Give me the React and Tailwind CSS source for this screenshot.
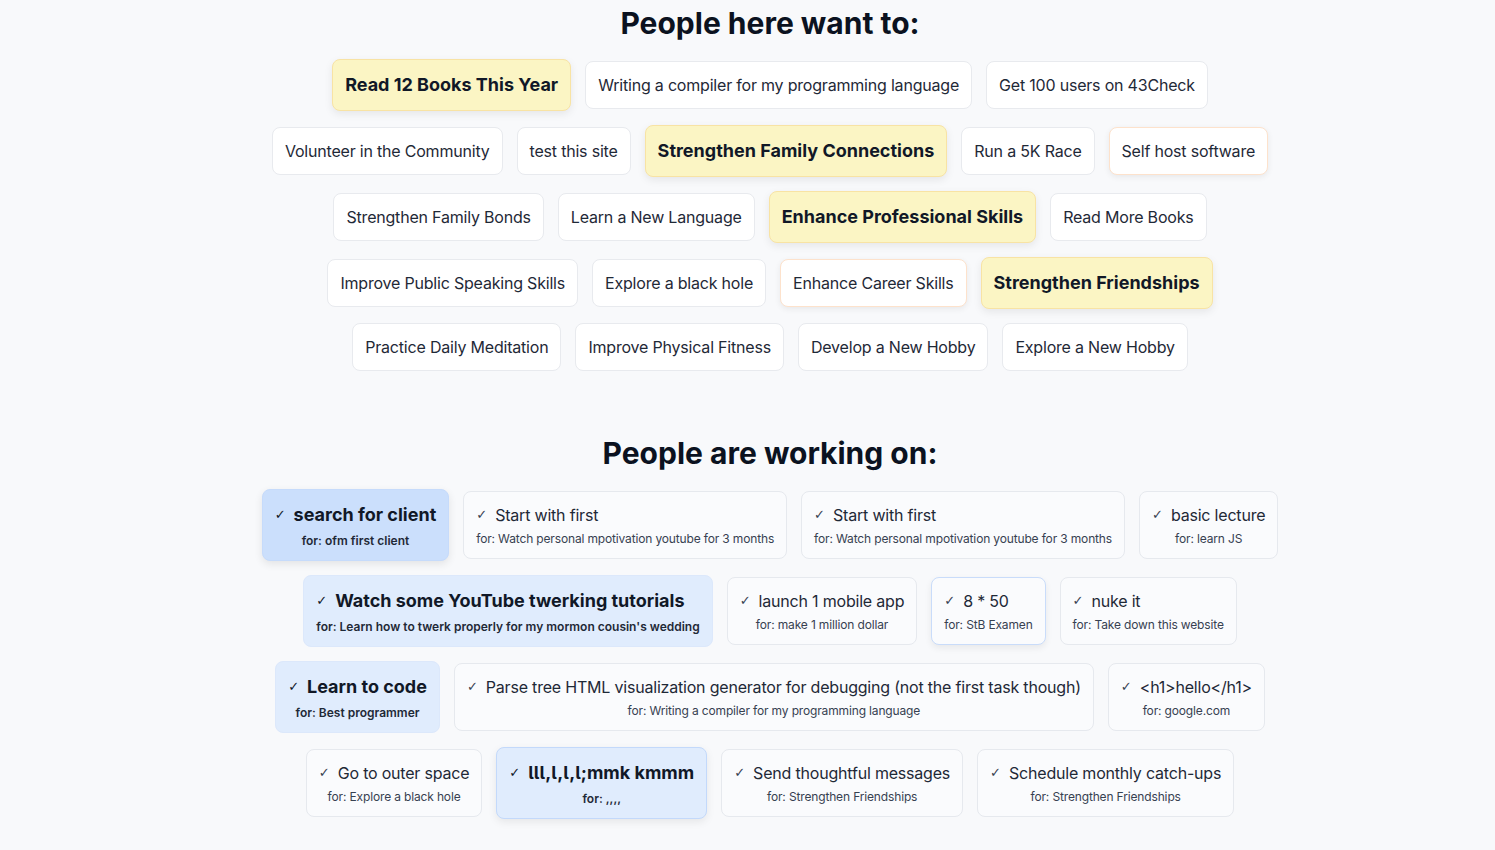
import React from "react";

const goalRows = [
  [
    { t: "Read 12 Books This Year", k: "hl" },
    { t: "Writing a compiler for my programming language" },
    { t: "Get 100 users on 43Check" },
  ],
  [
    { t: "Volunteer in the Community" },
    { t: "test this site" },
    { t: "Strengthen Family Connections", k: "hl" },
    { t: "Run a 5K Race" },
    { t: "Self host software", k: "or" },
  ],
  [
    { t: "Strengthen Family Bonds" },
    { t: "Learn a New Language" },
    { t: "Enhance Professional Skills", k: "hl" },
    { t: "Read More Books" },
  ],
  [
    { t: "Improve Public Speaking Skills" },
    { t: "Explore a black hole" },
    { t: "Enhance Career Skills", k: "or" },
    { t: "Strengthen Friendships", k: "hl" },
  ],
  [
    { t: "Practice Daily Meditation" },
    { t: "Improve Physical Fitness" },
    { t: "Develop a New Hobby" },
    { t: "Explore a New Hobby" },
  ],
];

const taskRows = [
  [
    { t: "search for client", f: "ofm first client", k: "strong" },
    { t: "Start with first", f: "Watch personal mpotivation youtube for 3 months" },
    { t: "Start with first", f: "Watch personal mpotivation youtube for 3 months" },
    { t: "basic lecture", f: "learn JS" },
  ],
  [
    { t: "Watch some YouTube twerking tutorials", f: "Learn how to twerk properly for my mormon cousin's wedding", k: "light" },
    { t: "launch 1 mobile app", f: "make 1 million dollar" },
    { t: "8 * 50", f: "StB Examen", k: "blueborder" },
    { t: "nuke it", f: "Take down this website" },
  ],
  [
    { t: "Learn to code", f: "Best programmer", k: "light" },
    { t: "Parse tree HTML visualization generator for debugging (not the first task though)", f: "Writing a compiler for my programming language" },
    { t: "<h1>hello</h1>", f: "google.com" },
  ],
  [
    { t: "Go to outer space", f: "Explore a black hole" },
    { t: "lll,l,l,l;mmk kmmm", f: ",,,,", k: "lightborder", tail: true },
    { t: "Send thoughtful messages", f: "Strengthen Friendships" },
    { t: "Schedule monthly catch-ups", f: "Strengthen Friendships" },
  ],
];

function Pill({ t, k }) {
  if (k === "hl") {
    return (
      <div className="rounded-lg border border-[#f8e3a4] bg-[#fbf5c4] px-3 py-[11px] text-lg leading-7 font-bold text-[#111827] shadow-[0_3px_8px_rgba(0,0,0,0.08)]">
        {t}
      </div>
    );
  }
  if (k === "or") {
    return (
      <div className="rounded-lg border border-[#fde2cc] bg-white px-3 py-[11px] text-base leading-6 tracking-[-0.2px] text-[#1f2937] shadow-[0_2px_6px_rgba(0,0,0,0.07)]">
        {t}
      </div>
    );
  }
  return (
    <div className="rounded-lg border border-[#e8eaee] bg-white px-3 py-[11px] text-base leading-6 tracking-[-0.2px] text-[#1f2937]">
      {t}
    </div>
  );
}

function Task({ t, f, k, tail }) {
  const bold = k === "strong" || k === "light" || k === "lightborder";
  let box = "border-[#e6e9ee] bg-[#fafbfd]";
  if (k === "strong") box = "border-[#c6dbfb] bg-[#cbdffc] shadow-[0_3px_8px_rgba(0,0,0,0.09)]";
  if (k === "light") box = "border-[#dce8fb] bg-[#e0ecfd]";
  if (k === "lightborder") box = "border-[#c3d9fb] bg-[#e0ecfd] shadow-[0_3px_8px_rgba(0,0,0,0.08)]";
  if (k === "blueborder") box = "border-[#c9dcfa] bg-[#fafbfd] shadow-[0_3px_7px_rgba(0,0,0,0.07)]";
  return (
    <div className={`rounded-lg border px-3 py-[11px] ${box}`}>
      <div className="flex items-center gap-2">
        <span
          className={
            bold
              ? "text-[13px] leading-4 font-bold text-[#111827]"
              : "text-[13px] leading-4 text-[#374151]"
          }
          style={{ fontFamily: "'DejaVu Sans', sans-serif" }}
        >
          ✓
        </span>
        <span
          className={
            bold
              ? `text-lg leading-7 font-bold whitespace-nowrap text-[#111827] ${tail ? "[font-feature-settings:'cv05']" : ""}`
              : "text-base leading-6 tracking-[-0.2px] whitespace-nowrap text-[#1f2937] [font-feature-settings:'calt'_0]"
          }
        >
          {t}
        </span>
      </div>
      <div
        className={
          bold
            ? "mt-1 text-center text-xs leading-4 font-semibold whitespace-nowrap text-[#1f2937]"
            : "mt-1 text-center text-xs leading-4 tracking-[-0.15px] whitespace-nowrap text-[#374151]"
        }
      >
        for: {f}
      </div>
    </div>
  );
}

export default function App() {
  return (
    <div
      className="min-h-[850px] bg-[#f8f9fb] pl-[45px] text-[#111827]"
      style={{ fontFamily: "Inter, 'Noto Sans', sans-serif" }}
    >
      <div className="mx-auto max-w-5xl pt-[5px]">
        <h1 className="mb-[18px] text-center text-3xl leading-9 font-bold text-[#0b1220]">
          People here want to:
        </h1>
        <div className="flex flex-col gap-3.5">
          {goalRows.map((row, i) => (
            <div key={i} className="flex items-center justify-center gap-3.5">
              {row.map((p, j) => (
                <Pill key={j} {...p} />
              ))}
            </div>
          ))}
        </div>

        <h2 className="mt-16 mb-[18px] text-center text-3xl leading-9 font-bold text-[#0b1220]">
          People are working on:
        </h2>
        <div className="flex flex-col gap-3.5">
          {taskRows.map((row, i) => (
            <div key={i} className="flex items-center justify-center gap-3.5">
              {row.map((p, j) => (
                <Task key={j} {...p} />
              ))}
            </div>
          ))}
        </div>
      </div>
    </div>
  );
}
